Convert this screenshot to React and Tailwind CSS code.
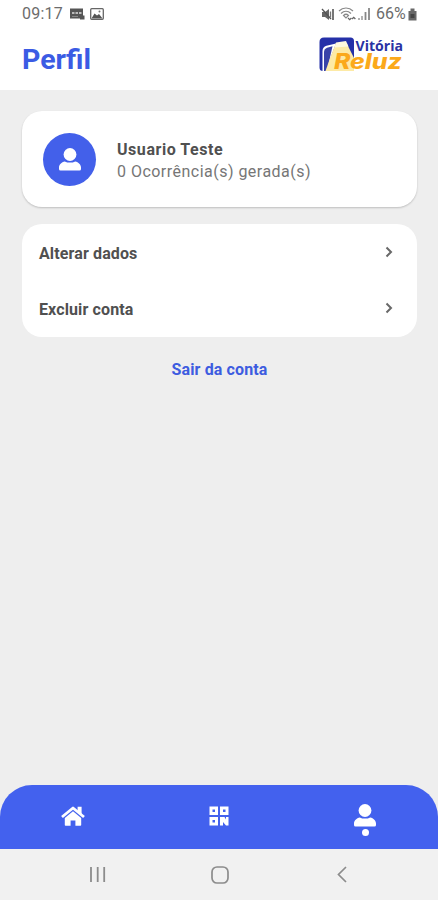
import React from 'react';

function PersonIcon({ className }) {
  return (
    <svg viewBox="0 0 22 23" className={className} fill="currentColor">
      <circle cx="11" cy="6.500" r="6.400" />
      <path d="M0 21v-1.500C0 16.500 2.500 14 5.800 13.400 7.300 14.200 9 14.600 11 14.600s3.700-.4 5.200-1.200C19.500 14 22 16.500 22 19.500V21q0 1.500-1.500 1.500h-19Q0 22.500 0 21Z" />
    </svg>
  );
}

function HomeIcon() {
  return (
    <svg viewBox="0 0 24 20" className="h-5 w-6" fill="currentColor">
      <path d="M12 5.300 3.800 12V19q0 .8.8.8h5V14.500h4.800v5.300h5q.8 0 .8-.8v-7Z" />
      <path d="M1 11 12 2l11 9" fill="none" stroke="currentColor" strokeWidth="2.800" strokeLinejoin="round" />
      <path d="M16.600 .8h4v8L16.600 6Z" />
    </svg>
  );
}

function QrIcon() {
  return (
    <svg viewBox="0 0 20 20" className="size-5" fill="currentColor">
      <path fillRule="evenodd" d="M.5.500H9V9H.500ZM3.500 3.500v2.500h2.500V3.500ZM11 .5h8.500V9H11ZM14 3.500v2.500h2.500V3.500ZM.5 11H9v8.500H.500ZM3.500 14v2.500h2.500V14Z" />
      <path d="M11 11h4.500l1.500 2.500V11h2.500v8.500H17l-3-3.500v3.500h-3Z" />
    </svg>
  );
}

function StatusBar() {
  return (
    <div className="flex h-7 items-center justify-between pl-[22px] pr-[21px] text-[#6c6c6c]">
      <div className="flex items-center">
        <span className="w-[47px] text-[16px] leading-7 tracking-[0.25px]">09:17</span>
        <svg viewBox="0 0 16 12" className="h-3 w-4">
          <path d="M1 .5h13v7h1.500v4H11v-1H1Z" fill="#555" />
          <path d="M3 5h2.500M6.500 5h2.500M10 5h2.500" stroke="#ddd" strokeWidth="1.500" />
          <path d="M3 8.500h6" stroke="#888" />
        </svg>
        <svg viewBox="0 0 14 12" className="ml-[5px] h-3 w-3.5">
          <rect x=".7" y=".7" width="12.600" height="10.600" rx="1" fill="none" stroke="#666" strokeWidth="1.300" />
          <path d="m1.500 10.500 3-5 2.500 2 2-1.500 3.500 4.500Z" fill="#555" />
          <circle cx="9.500" cy="3.500" r="1" fill="#777" />
        </svg>
      </div>
      <div className="flex items-center">
        <svg viewBox="0 0 14 13" className="h-[13px] w-3.5">
          <path d="M1 4h3l4-3v11L4 9H1Z" fill="#666" />
          <path d="m1 1 9 10" stroke="#555" strokeWidth="1.300" />
          <path d="M9.500 3.500v6" stroke="#777" strokeWidth="1.300" />
          <path d="M12 1v11" stroke="#555" strokeWidth="1.600" />
        </svg>
        <svg viewBox="0 0 18 14" className="ml-[3px] h-3.5 w-[18px]" fill="none" stroke="#888" strokeWidth="1.200">
          <path d="M1 4c4-4 10-4 14 0M3 6.500c3-3 7-3 10 0M5.500 8.500c1.500-1.500 3.500-1.500 5 0L8 11Z" />
          <path d="m10 11 1.700 1.700 1.700-1.700M14 12l1.700-1.700L17.400 12" stroke="#666" />
        </svg>
        <svg viewBox="0 0 13 12" className="ml-[2px] h-3 w-[13px]">
          <path d="M1 10v2M4 8v4" stroke="#999" strokeWidth="1.500" />
          <path d="M7.500 4v8M11 0v12" stroke="#888" strokeWidth="1.800" />
        </svg>
        <span className="ml-[5px] w-[32px] text-[16px] leading-7">66%</span>
        <svg viewBox="0 0 9 13" className="h-[13px] w-[9px]">
          <path d="M2.500.500h4V3h2v9.500H.500V3h2Z" fill="#686868" />
          <path d="M2.500 6h4v4h-4Z" fill="#444" />
        </svg>
      </div>
    </div>
  );
}

function Logo() {
  return (
    <svg viewBox="0 0 86 36" className="h-9 w-[86px]">
      <path d="M5 .5h26.500q3.500 0 3.500 3.500v20H10L8 34H4q-3.500 0-3.500-3.500V5q0-4.500 4.500-4.500Z" fill="#2530a8" />
      <path d="M3.500 34V14q0-4 4-5.200L17 6.500 13 17 7.500 34Z" fill="#fff" />
      <path d="M5 34V14.500q0-2.500 3-3.700l5.500-1.500L8 34Z" fill="#3943a8" />
      <path d="M17 6h10.500L35 21v13H6.500l5-14Z" fill="#fdeaa6" />
      <path d="m17 5.500 10-1.500 2.500 5.500-14 1Z" fill="#fff8df" />
      <text x="36.500" y="14" fontSize="14" fontWeight="700" fill="#2932a4" textLength="47.500" lengthAdjust="spacingAndGlyphs" className="font-['Open_Sans',sans-serif]">Vitória</text>
      <text x="15" y="32" fontSize="21" fontWeight="800" fontStyle="italic" fill="#fba91b" textLength="68" lengthAdjust="spacingAndGlyphs" className="font-['Inter',sans-serif]">Reluz</text>
    </svg>
  );
}

function MenuRow({ label }) {
  return (
    <button className="flex h-14 w-full items-center justify-between pl-[17px] pr-6 text-[16px] font-bold text-[#505050]">
      <span className="pt-[3px] tracking-[0.12px]">{label}</span>
      <svg viewBox="0 0 8 12" className="h-3 w-2" fill="none" stroke="#686868" strokeWidth="2">
        <path d="m1.500 1.500 4.500 4.500-4.500 4.500" />
      </svg>
    </button>
  );
}

function App() {
  return (
    <div className="flex h-[900px] w-full flex-col overflow-hidden bg-[#eeeeee] font-['Roboto',sans-serif]">
      <header className="h-[90px] shrink-0 bg-white">
        <StatusBar />
        <div className="flex items-start justify-between pl-[22px] pr-[33px] pt-[9px]">
          <h1 className="pt-[5px] text-[28.500px] font-bold leading-9 text-[#3b5be4]">Perfil</h1>
          <Logo />
        </div>
      </header>

      <main className="flex flex-1 flex-col pl-[22px] pr-[21px] pt-[21px]">
        <section className="flex h-24 items-center rounded-[20px] bg-white pl-[21px] shadow-[0_1px_2px_rgba(0,0,0,0.2)]">
          <div className="flex size-[53px] items-center justify-center rounded-full bg-[#4360ea] text-white">
            <PersonIcon className="h-[23px] w-[22px]" />
          </div>
          <div className="ml-[21px] pt-[4px] text-[16px] leading-[22px]">
            <p className="font-bold tracking-[0.55px] text-[#505050]">Usuario Teste</p>
            <p className="tracking-[0.48px] text-[#767676]">0 Ocorrência(s) gerada(s)</p>
          </div>
        </section>

        <section className="mt-[17px] rounded-[20px] bg-white pb-px">
          <MenuRow label="Alterar dados" />
          <MenuRow label="Excluir conta" />
        </section>

        <button className="mt-5 self-center text-[16px] font-bold leading-[25px] tracking-[0.12px] text-[#3d5ce0]">
          Sair da conta
        </button>
      </main>

      <nav className="grid h-16 shrink-0 grid-cols-3 rounded-t-[32px] bg-[#4361ee] text-white">
        <div className="flex justify-center pt-[21px]">
          <HomeIcon />
        </div>
        <div className="flex justify-center pt-[21px]">
          <QrIcon />
        </div>
        <div className="flex flex-col items-center pt-[19px]">
          <PersonIcon className="h-[23px] w-[22px]" />
          <span className="mt-[2px] size-[7px] rounded-full bg-white" />
        </div>
      </nav>

      <footer className="flex h-[51px] shrink-0 items-center justify-between bg-[#f1f1f1] pl-[89px] pr-[91px] text-[#8c8c8c]">
        <svg viewBox="0 0 17 17" className="size-[17px]" stroke="currentColor" strokeWidth="1.800">
          <path d="M2 1v15M8.700 1v15M15.200 1v15" />
        </svg>
        <svg viewBox="0 0 18 18" className="mr-1 size-[18px]" fill="none" stroke="currentColor" strokeWidth="1.700">
          <rect x="1" y="1" width="16" height="16" rx="5" />
        </svg>
        <svg viewBox="0 0 10 17" className="h-[17px] w-2.5" fill="none" stroke="currentColor" strokeWidth="1.700">
          <path d="M9 1 1.500 8.500 9 16" />
        </svg>
      </footer>
    </div>
  );
}

export default App;
